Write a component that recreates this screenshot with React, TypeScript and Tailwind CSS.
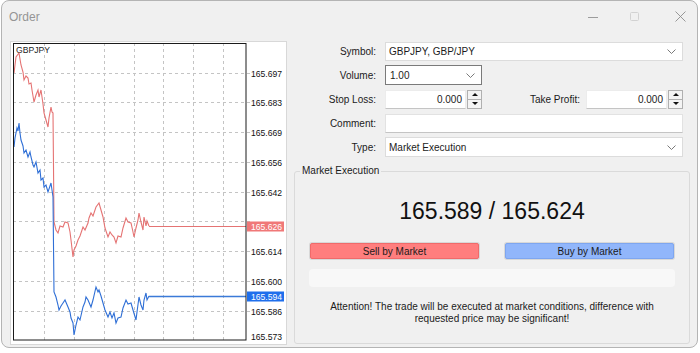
import React from "react";

const RED = [
  [13, 73], [15, 57], [18, 53], [20, 65], [22, 72], [23, 80], [25, 76], [27, 78], [28, 84], [30, 83],
  [31, 90], [33, 102], [35, 95], [37, 90], [38, 97], [40, 90], [42, 104], [43, 113], [45, 120], [47, 127],
  [48, 118], [50, 107], [51, 112], [52, 113], [53, 222], [55, 230], [57, 233], [59, 226], [62, 227], [64, 222],
  [67, 223], [69, 232], [70, 240], [72, 257], [73, 250], [75, 246], [77, 240], [79, 236], [82, 227], [84, 230],
  [87, 223], [88, 218], [90, 213], [92, 216], [95, 207], [98, 203], [100, 210], [102, 217], [104, 228], [107, 237],
  [109, 232], [111, 235], [113, 237], [115, 243], [117, 236], [120, 237], [122, 228], [125, 218], [127, 222], [130, 223],
  [132, 232], [133, 237], [135, 228], [137, 220], [138, 213], [140, 222], [142, 230], [143, 217], [145, 226], [146, 221],
  [148, 226],
];

const BLUE = [
  [13, 147], [14, 138], [16, 128], [17, 131], [18, 123], [19, 133], [20, 140], [22, 146], [23, 153], [25, 150],
  [27, 157], [29, 152], [30, 157], [32, 165], [33, 167], [35, 162], [37, 173], [39, 170], [40, 180], [42, 178],
  [43, 187], [45, 185], [47, 192], [49, 186], [50, 183], [51, 190], [52, 197], [53, 292], [55, 297], [57, 305],
  [58, 310], [60, 306], [62, 303], [64, 300], [67, 307], [69, 312], [70, 318], [72, 323], [73, 335], [75, 325],
  [77, 317], [79, 320], [82, 307], [84, 302], [85, 297], [87, 300], [90, 307], [92, 300], [95, 287], [97, 292],
  [98, 290], [100, 296], [102, 303], [104, 310], [107, 317], [109, 312], [111, 318], [113, 313], [115, 323], [117, 318],
  [120, 317], [122, 308], [125, 300], [127, 304], [130, 303], [132, 310], [135, 320], [136, 312], [138, 297], [140, 305],
  [142, 310], [143, 300], [145, 293], [146, 300], [148, 296],
];

// 165.628 sits behind the red ask label, so it is left out of the regular ticks
const PRICES = ["165.697", "165.683", "165.669", "165.656", "165.642", "", "165.614", "165.600", "165.586"];
const GRID_X = [43, 73, 103, 133, 162, 192, 222];

const pts = (arr: number[][]) => arr.map(([x, y]) => `${x},${y}`).join(" ");

function Chart() {
  return (
    <svg width={275} height={302} viewBox="10 42 275 302" className="block">
      {GRID_X.map((x) => (
        <line key={x} x1={x + 0.5} y1={43} x2={x + 0.5} y2={340} stroke="#c4c4c4" strokeDasharray="3 3" />
      ))}
      {PRICES.map((p, i) => {
        const y = Math.round(72.7 + i * 29.75) + 0.5;
        return (
          <g key={i}>
            <line x1={12} y1={y} x2={249} y2={y} stroke="#c4c4c4" strokeDasharray="3 3" />
            {p && (
              <text x={250} y={y + 3} fontSize={8.6} fill="#111" fontFamily="'Liberation Sans', sans-serif">{p}</text>
            )}
          </g>
        );
      })}
      <text x={250} y={340} fontSize={8.6} fill="#111" fontFamily="'Liberation Sans', sans-serif">165.573</text>
      <text x={15} y={53} fontSize={8.6} fill="#222" fontFamily="'Liberation Sans', sans-serif">GBPJPY</text>

      <polyline points={pts(RED)} fill="none" stroke="#e57373" strokeWidth={1.1} />
      <polyline points={pts(BLUE)} fill="none" stroke="#2f6fd6" strokeWidth={1.1} />
      <line x1={148} y1={226.5} x2={245} y2={226.5} stroke="#e57373" />
      <line x1={148} y1={296.5} x2={245} y2={296.5} stroke="#3b7ad8" strokeWidth={1.4} />

      <rect x={12.5} y={43.5} width={232.5} height={296.5} fill="none" stroke="#1a1a1a" />

      <rect x={246} y={221.5} width={37} height={10} fill="#f07878" />
      <text x={250} y={229.5} fontSize={8.6} fill="#fff" fontFamily="'Liberation Sans', sans-serif">165.626</text>
      <rect x={246} y={291.5} width={37} height={10} fill="#1f6fec" />
      <text x={250} y={299.5} fontSize={8.6} fill="#fff" fontFamily="'Liberation Sans', sans-serif">165.594</text>
    </svg>
  );
}

function Chevron() {
  return (
    <svg width={9} height={5} viewBox="0 0 9 5" className="shrink-0">
      <polyline points="0.5,0.5 4.5,4.5 8.5,0.5" fill="none" stroke="#6b6b6b" strokeWidth={0.9} />
    </svg>
  );
}

function Spinner() {
  return (
    <div className="w-[15px] h-[19px] border border-[#b0b0b0] bg-[#f4f4f4] flex flex-col shrink-0">
      <div className="flex-1 flex items-center justify-center">
        <div className="w-0 h-0 border-l-[3px] border-r-[3px] border-b-[3px] border-l-transparent border-r-transparent border-b-[#111]" />
      </div>
      <div className="h-px bg-[#b0b0b0]" />
      <div className="flex-1 flex items-center justify-center">
        <div className="w-0 h-0 border-l-[3px] border-r-[3px] border-t-[3px] border-l-transparent border-r-transparent border-t-[#111]" />
      </div>
    </div>
  );
}

function Label({ children, w = "w-[89px]" }: { children: React.ReactNode; w?: string }) {
  return <span className={`${w} text-right shrink-0`}>{children}</span>;
}

export default function App() {
  return (
    <div className="w-[700px] h-[353px] bg-white overflow-hidden font-['Liberation_Sans',sans-serif] text-[10px] text-[#1b1b1b]">
      <div className="ml-px w-[697px] h-[348px] bg-[#f0f0f0] border border-[#b4b4b4] rounded-[8px] flex flex-col">
        {/* Title bar */}
        <div className="h-[31px] flex items-center pl-[7px] shrink-0">
          <span className="text-[12px] text-[#959595]">Order</span>
          <div className="ml-auto flex items-center pr-[11px]">
            <svg width={10} height={10} viewBox="0 0 10 10">
              <line x1={0} y1={5.5} x2={10} y2={5.5} stroke="#9c9c9c" />
            </svg>
            <svg width={9} height={9} viewBox="0 0 9 9" className="ml-[32px]">
              <rect x={0.5} y={0.5} width={8} height={8} rx={1} fill="none" stroke="#d2d2d2" />
            </svg>
            <svg width={11} height={11} viewBox="0 0 11 11" className="ml-[36px]">
              <path d="M0.5 0.5 L10.5 10.5 M10.5 0.5 L0.5 10.5" stroke="#8c8c8c" strokeWidth={0.9} />
            </svg>
          </div>
        </div>

        {/* Body */}
        <div className="flex pt-[9px] pl-[8px]">
          <div className="w-[277px] h-[304px] bg-white border border-[#d8d8d8] shrink-0">
            <Chart />
          </div>

          <div className="flex-1 flex flex-col">
            <div className="flex flex-col gap-[4px]">
              <div className="flex items-center h-[20px]">
                <Label>Symbol:</Label>
                <div className="ml-[9px] w-[298px] h-[19px] bg-white border border-[#dcdcdc] flex items-center pl-[3px] pr-[6px]">
                  <span className="flex-1">GBPJPY, GBP/JPY</span>
                  <Chevron />
                </div>
              </div>
              <div className="flex items-center h-[20px]">
                <Label>Volume:</Label>
                <div className="ml-[9px] w-[97px] h-[20px] bg-white border border-[#7a7a7a] flex items-center pl-[4px] pr-[6px]">
                  <span className="flex-1">1.00</span>
                  <Chevron />
                </div>
              </div>
              <div className="flex items-center h-[20px]">
                <Label>Stop Loss:</Label>
                <div className="ml-[9px] w-[97px] flex items-center gap-px">
                  <div className="flex-1 h-[19px] bg-white border border-[#ececec] border-b-[#c4c4c4] flex items-center justify-end pr-[3px]">0.000</div>
                  <Spinner />
                </div>
                <Label w="w-[98px]">Take Profit:</Label>
                <div className="ml-[6px] w-[97px] flex items-center gap-px">
                  <div className="flex-1 h-[19px] bg-white border border-[#ececec] border-b-[#c4c4c4] flex items-center justify-end pr-[3px]">0.000</div>
                  <Spinner />
                </div>
              </div>
              <div className="flex items-center h-[20px]">
                <Label>Comment:</Label>
                <div className="ml-[9px] w-[298px] h-[19px] bg-white border border-[#e2e2e2] border-b-[#c4c4c4]" />
              </div>
              <div className="flex items-center h-[20px]">
                <Label>Type:</Label>
                <div className="ml-[9px] w-[298px] h-[20px] bg-white border border-[#dcdcdc] flex items-center pl-[3px] pr-[6px]">
                  <span className="flex-1">Market Execution</span>
                  <Chevron />
                </div>
              </div>
            </div>

            <fieldset className="mt-[9px] ml-[7px] w-[396px] h-[178px] border border-[#dadada] rounded-[3px]">
              <legend className="ml-[5px] px-[2px] leading-[10px]">Market Execution</legend>
              <div className="flex flex-col items-center px-[14px]">
                <div className="mt-[22px] text-[23px] leading-[26px] text-[#111]">165.589 / 165.624</div>
                <div className="mt-[18px] w-full flex gap-[24px]">
                  <div className="flex-1 h-[18px] rounded-[3px] bg-[#d8d8d8] p-px">
                    <div className="h-full rounded-[2px] bg-[#ff7e7e] border border-[#f06a6a] flex items-center justify-center">Sell by Market</div>
                  </div>
                  <div className="flex-1 h-[18px] rounded-[3px] bg-[#d8d8d8] p-px">
                    <div className="h-full rounded-[2px] bg-[#91b6fb] border border-[#7ea6f0] flex items-center justify-center">Buy by Market</div>
                  </div>
                </div>
                <div className="mt-[9px] w-full h-[18px] rounded-[4px] bg-[#f8f8f8]" />
                <div className="mt-[14px] text-center leading-[12px]">
                  Attention! The trade will be executed at market conditions, difference with
                  <br />
                  requested price may be significant!
                </div>
              </div>
            </fieldset>
          </div>
        </div>
      </div>
    </div>
  );
}
